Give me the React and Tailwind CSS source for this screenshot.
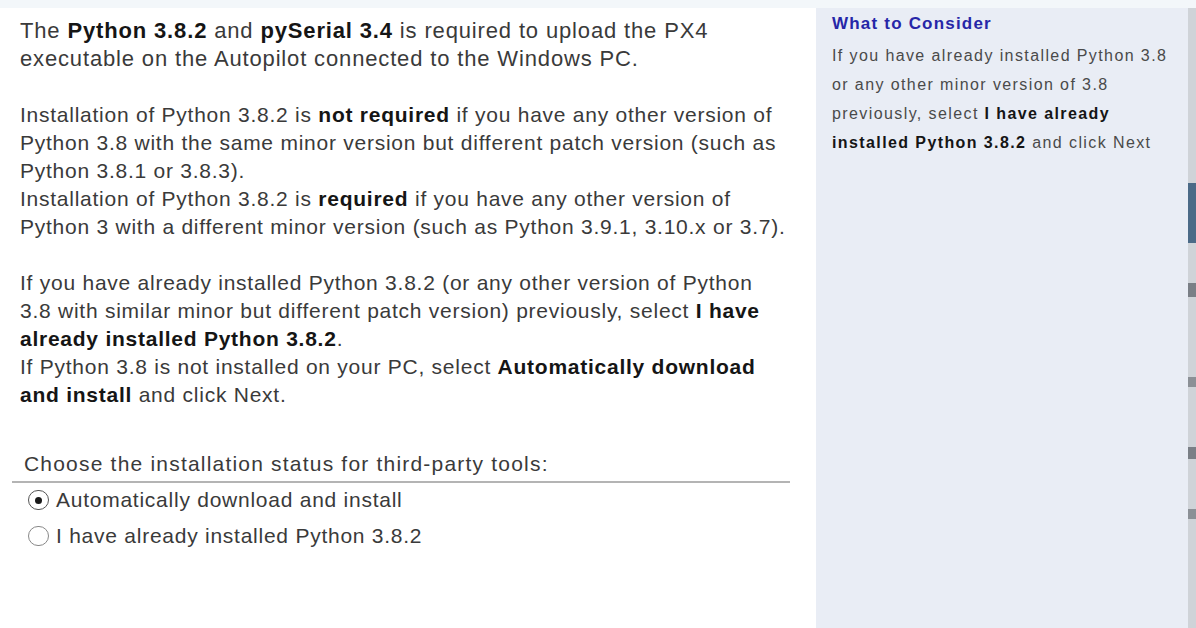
export default function App() {
  return (
    <div className="flex h-[628px] w-[1196px] flex-col overflow-hidden bg-white font-['Liberation_Sans',Arial,sans-serif]">
      <div className="h-2 bg-[#f3f7fa]" />
      <div className="flex flex-1">
        <div className="w-[816px] pl-5 pt-[9px] text-[21px] leading-[28px] tracking-[0.75px] text-[#3a3a3a] whitespace-nowrap">
          <p className="text-[22px] tracking-[0.85px]">
            The <b className="text-[#151515]">Python 3.8.2</b> and <b className="text-[#151515]">pySerial 3.4</b> is required to upload the PX4
            <br />
            executable on the Autopilot connected to the Windows PC.
          </p>
          <p className="mt-7">
            Installation of Python 3.8.2 is <b className="text-[#151515]">not required</b> if you have any other version of
            <br />
            Python 3.8 with the same minor version but different patch version (such as
            <br />
            Python 3.8.1 or 3.8.3).
            <br />
            Installation of Python 3.8.2 is <b className="text-[#151515]">required</b> if you have any other version of
            <br />
            Python 3 with a different minor version (such as Python 3.9.1, 3.10.x or 3.7).
          </p>
          <p className="mt-7">
            If you have already installed Python 3.8.2 (or any other version of Python
            <br />
            3.8 with similar minor but different patch version) previously, select <b className="text-[#151515]">I have</b>
            <br />
            <b className="text-[#151515]">already installed Python 3.8.2</b>.
            <br />
            If Python 3.8 is not installed on your PC, select <b className="text-[#151515]">Automatically download</b>
            <br />
            <b className="text-[#151515]">and install</b> and click Next.
          </p>

          <div className="mt-[41px] w-[778px] -ml-2">
            <div className="border-b-2 border-[#b4b4b4] pb-[3px] pl-3 tracking-[1.2px]">Choose the installation status for third-party tools:</div>
            <label className="mt-[3px] flex items-center gap-[7px] pl-[16px]">
              <span className="flex h-[20px] w-[21px] items-center justify-center rounded-full border border-[#555] bg-white">
                <span className="h-[7px] w-[7px] rounded-full bg-[#1a1a1a]" />
              </span>
              Automatically download and install
            </label>
            <label className="mt-[8px] flex items-center gap-[7px] pl-[16px]">
              <span className="h-[20px] w-[21px] rounded-full border border-[#888] bg-white" />
              I have already installed Python 3.8.2
            </label>
          </div>
        </div>

        <div className="w-[372px] bg-[#e9edf5] pl-4 pt-[3px] whitespace-nowrap">
          <h3 className="text-[17px] font-bold leading-[26px] tracking-[1.2px] text-[#2626a8]">What to Consider</h3>
          <p className="mt-[4px] text-[16px] leading-[29px] tracking-[1.4px] text-[#4a4a4a]">
            If you have already installed Python 3.8
            <br />
            or any other minor version of 3.8
            <br />
            previously, select <b className="text-[#151515]">I have already</b>
            <br />
            <b className="text-[#151515]">installed Python 3.8.2</b> and click Next
          </p>
        </div>

        <div className="flex w-2 flex-col bg-[#cfd3d8]">
          <div className="mt-[175px] h-[60px] bg-[#4b6a87]" />
          <div className="mt-[40px] h-[14px] bg-[#7a7f86]" />
          <div className="mt-[80px] h-[10px] bg-[#8b9096]" />
          <div className="mt-[60px] h-[12px] bg-[#7a7f86]" />
          <div className="mt-[50px] h-[10px] bg-[#8b9096]" />
        </div>
      </div>
    </div>
  );
}
